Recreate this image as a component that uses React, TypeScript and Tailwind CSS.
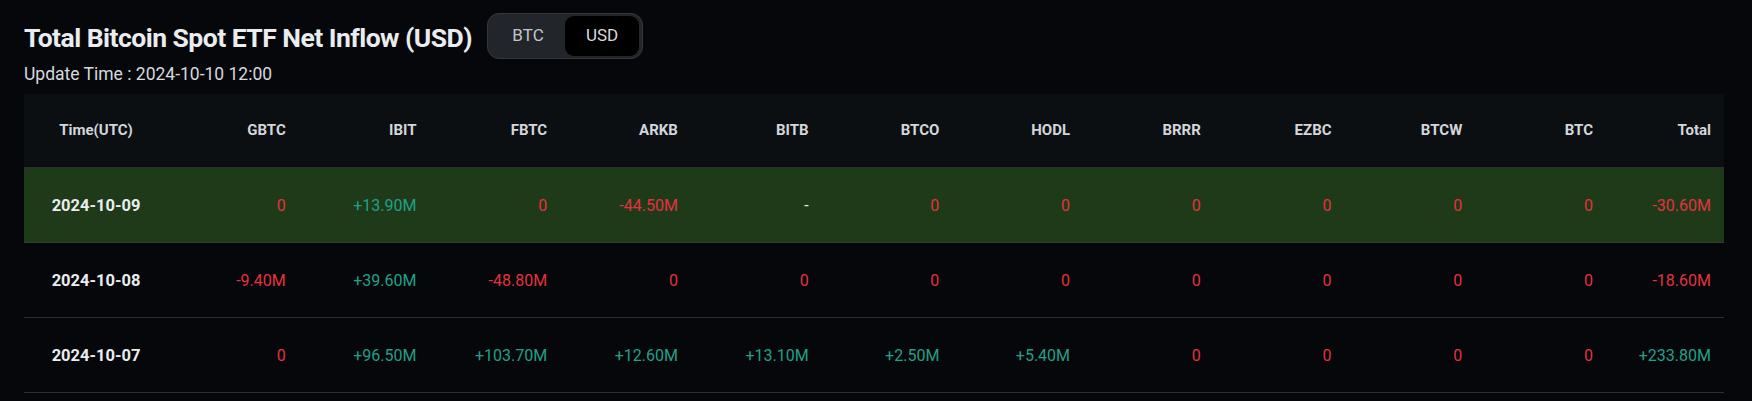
import React from "react";

type Cell = string;

const columns = [
  "Time(UTC)",
  "GBTC",
  "IBIT",
  "FBTC",
  "ARKB",
  "BITB",
  "BTCO",
  "HODL",
  "BRRR",
  "EZBC",
  "BTCW",
  "BTC",
  "Total",
];

const rows: { date: string; values: Cell[]; highlight?: boolean }[] = [
  {
    date: "2024-10-09",
    highlight: true,
    values: ["0", "+13.90M", "0", "-44.50M", "-", "0", "0", "0", "0", "0", "0", "-30.60M"],
  },
  {
    date: "2024-10-08",
    values: ["-9.40M", "+39.60M", "-48.80M", "0", "0", "0", "0", "0", "0", "0", "0", "-18.60M"],
  },
  {
    date: "2024-10-07",
    values: ["0", "+96.50M", "+103.70M", "+12.60M", "+13.10M", "+2.50M", "+5.40M", "0", "0", "0", "0", "+233.80M"],
  },
];

function valueColor(v: string) {
  if (v === "-") return "text-[#eaecef]";
  if (v.startsWith("+")) return "text-[#22a087]";
  return "text-[#e2333f]";
}

const grid = "grid grid-cols-[144px_repeat(11,minmax(0,1fr))_118px] items-center";

export default function App() {
  const [unit, setUnit] = React.useState<"BTC" | "USD">("USD");

  return (
    <div className="min-h-screen bg-[#05070a] pl-6 pr-7 font-['Roboto',sans-serif] text-[#eaecef]">
      <div className="flex items-center pt-[13px]">
        <h1 className="mt-[5px] text-[26.5px] font-bold leading-none tracking-[-0.02em] text-[#eaecef]">
          Total Bitcoin Spot ETF Net Inflow (USD)
        </h1>
        <div className="ml-[15px] flex h-[46px] items-center rounded-[12px] border border-[#33363c] bg-[#22252a] p-[3px]">
          {(["BTC", "USD"] as const).map((u) => (
            <button
              key={u}
              onClick={() => setUnit(u)}
              className={
                "h-[40px] w-[74px] rounded-[9px] text-[17px] " +
                (unit === u ? "bg-black text-[#d6d9de]" : "text-[#c4c7cc]")
              }
            >
              {u}
            </button>
          ))}
        </div>
      </div>
      <div className="mt-[3px] text-[17.5px] leading-6 text-[#d6d9de]">Update Time : 2024-10-10 12:00</div>

      <div className="mt-2">
        <div className={grid + " h-[74px] border-b border-[#2b2e34] bg-[#0c0f12] text-[15px] font-bold text-[#d3d6db]"}>
          {columns.map((c, i) => (
            <div key={c} className={i === 0 ? "text-center" : "px-[13px] text-right"}>
              {c}
            </div>
          ))}
        </div>
        {rows.map((r) => (
          <div
            key={r.date}
            className={
              grid +
              " h-[75px] border-b text-[16px] " +
              (r.highlight ? "border-[#2e3d2c] bg-[#1e3a19]" : "border-[#2b2e34]")
            }
          >
            <div className="pt-[2px] text-center text-[16.5px] font-bold text-[#eaecef]">{r.date}</div>
            {r.values.map((v, i) => (
              <div key={i} className={"pt-[2px] px-[13px] text-right " + valueColor(v)}>
                {v}
              </div>
            ))}
          </div>
        ))}
      </div>
    </div>
  );
}
